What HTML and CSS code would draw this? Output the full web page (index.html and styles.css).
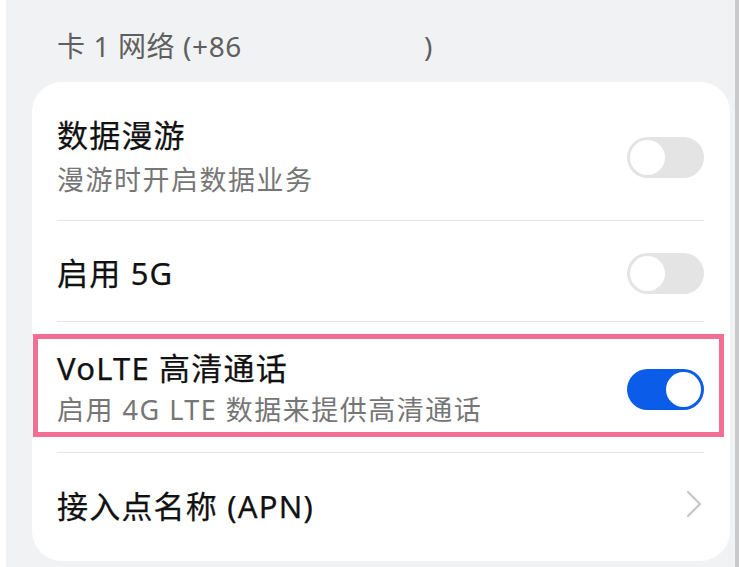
FILE: index.html
```html
<!DOCTYPE html>
<html lang="zh-CN">
<head>
    <meta charset="UTF-8">
    <meta name="viewport" content="width=device-width, initial-scale=1.0">
    <title>移动网络</title>
    <link rel="stylesheet" href="styles.css">
</head>
<body>
    <div class="screen">
        <div class="section-title">卡 1 网络 (+86<span class="number-gap"></span>)</div>

        <div class="card">
            <div class="row row-tall">
                <div class="row-text">
                    <div class="row-title">数据漫游</div>
                    <div class="row-sub">漫游时开启数据业务</div>
                </div>
                <div class="switch"><span class="knob"></span></div>
            </div>

            <div class="row row-short">
                <div class="row-text">
                    <div class="row-title">启用 5G</div>
                </div>
                <div class="switch"><span class="knob"></span></div>
            </div>

            <div class="row row-tall highlighted">
                <div class="row-text">
                    <div class="row-title">VoLTE 高清通话</div>
                    <div class="row-sub">启用 4G LTE 数据来提供高清通话</div>
                </div>
                <div class="switch on"><span class="knob"></span></div>
            </div>

            <div class="row row-last">
                <div class="row-text">
                    <div class="row-title">接入点名称 (APN)</div>
                </div>
                <svg class="chevron" width="16" height="28" viewBox="0 0 16 28">
                    <polyline points="2,2 14,14 2,26" fill="none" stroke="#c6c6c6" stroke-width="2.2" stroke-linecap="round" stroke-linejoin="round"/>
                </svg>
            </div>
        </div>
    </div>
</body>
</html>
```

FILE: styles.css
```css
* {
    margin: 0;
    padding: 0;
    box-sizing: border-box;
}

body {
    font-family: "Noto Sans", "Noto Sans CJK SC", sans-serif;
    background: #f1f2f4;
}

.screen {
    height: 567px;
    background: #f1f2f4;
    border-left: 6px solid #ffffff;
    border-right: 4px solid #c9c9cb;
    padding: 0 5px 0 26px;
    overflow: hidden;
}

.section-title {
    height: 82px;
    padding: 28px 0 0 25px;
    font-size: 28px;
    line-height: 36px;
    color: #5f5f5f;
    letter-spacing: 0.6px;
}

.number-gap {
    display: inline-block;
    width: 182px;
}

.card {
    background: #ffffff;
    border-radius: 30px;
    padding: 8px 26px 6px 25px;
}

.row {
    display: flex;
    align-items: center;
    justify-content: space-between;
    border-bottom: 1px solid #e5e5e7;
    position: relative;
}

.row-text {
    padding-top: 4px;
}

.row-tall {
    height: 131px;
}

.row-short {
    height: 101px;
}

.row-last {
    height: 102px;
    border-bottom: none;
}

.row-title {
    font-size: 31px;
    line-height: 40px;
    color: #111111;
    letter-spacing: 1.2px;
    -webkit-text-stroke: 0.25px #111111;
}

.row-sub {
    font-size: 27px;
    line-height: 40px;
    margin-top: 5px;
    color: #767676;
    letter-spacing: 1.5px;
}

.highlighted .row-sub {
    margin-top: 2px;
}

/* annotation box drawn on top of the screenshot */
.highlighted::after {
    content: "";
    position: absolute;
    top: 12px;
    bottom: 15px;
    left: -24px;
    right: -20px;
    border: 5px solid #f26e93;
    pointer-events: none;
}

.switch {
    width: 77px;
    height: 41px;
    border-radius: 21px;
    background: #e4e4e4;
    padding: 3px;
    display: flex;
    margin-top: 4px;
}

.knob {
    width: 35px;
    height: 35px;
    border-radius: 50%;
    background: #ffffff;
}

.switch.on {
    background: #0a5ce9;
    justify-content: flex-end;
}

.chevron {
    margin-right: 2px;
}
```
